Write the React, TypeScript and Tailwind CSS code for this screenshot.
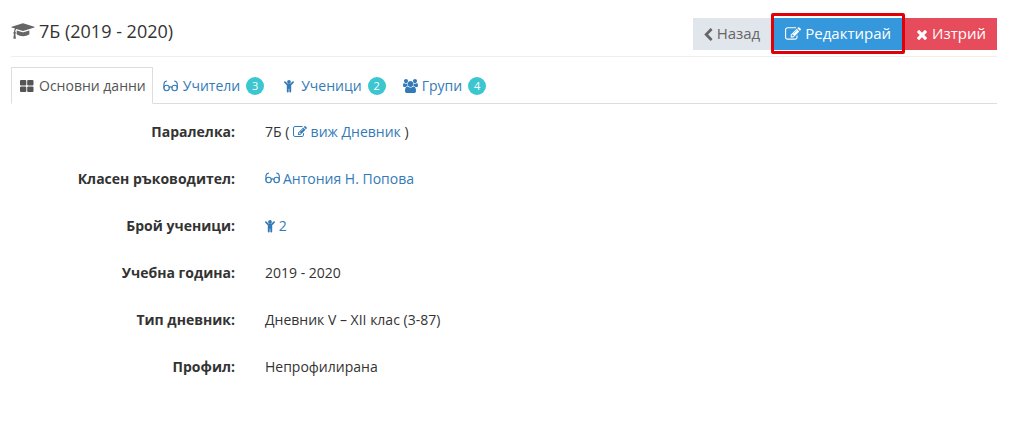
import type { ReactNode } from "react";

type IconProps = {
  className?: string;
};

type Tab = {
  label: string;
  href: string;
  icon: ReactNode;
  count?: number;
};

type Detail = {
  label: string;
  value: ReactNode;
};

const tabs: Tab[] = [
  { label: "Учители", href: "#teachers", icon: <GlassesIcon className="h-[14px] w-4" />, count: 3 },
  { label: "Ученици", href: "#students", icon: <ChildIcon className="mx-[3px] h-[14px] w-[10px]" />, count: 2 },
  { label: "Групи", href: "#groups", icon: <UsersIcon className="h-[14px] w-[15px]" />, count: 4 }
];

const details: Detail[] = [
  {
    label: "Паралелка:",
    value: (
      <>
        7Б ({" "}
        <a href="#journal" className="text-[#337ab7] hover:underline">
          <EditIcon className="inline h-[14px] w-[14px] align-[-2px]" /> виж Дневник
        </a>{" "}
        )
      </>
    )
  },
  {
    label: "Класен ръководител:",
    value: (
      <a href="#teacher" className="text-[#337ab7] hover:underline">
        <GlassesIcon className="mr-[2px] inline h-[14px] w-4 align-[-1px]" />
        Антония Н. Попова
      </a>
    )
  },
  {
    label: "Брой ученици:",
    value: (
      <a href="#students" className="text-[#337ab7] hover:underline">
        <ChildIcon className="inline h-[14px] w-[10px] align-[-2px]" /> 2
      </a>
    )
  },
  { label: "Учебна година:", value: "2019 - 2020" },
  { label: "Тип дневник:", value: "Дневник V – XII клас (3-87)" },
  { label: "Профил:", value: "Непрофилирана" }
];

export default function App() {
  return (
    <main className="bg-white pr-3 pl-[11px] font-['Open_Sans','Noto_Sans',sans-serif] text-sm text-[#333333]">
      <header className="flex h-[57px] items-start justify-between border-b border-[#eeeeee] pt-[18px]">
        <h1 className="flex h-[26px] items-center gap-1 text-lg">
          <GraduationIcon className="h-[18px] w-6 text-[#666666]" />
          7Б (2019 - 2020)
        </h1>
        <div className="flex gap-[3px] text-[15px]">
          <button
            type="button"
            className="flex h-8 items-center gap-1 bg-[#e1e5ec] px-[11px] text-[#666666]"
          >
            <ChevronIcon className="h-[13px] w-[9px]" />
            Назад
          </button>
          <button
            type="button"
            className="relative flex h-8 items-center gap-1 bg-[#3598dc] px-[11px] text-white"
          >
            <EditIcon className="h-4 w-4" />
            Редактирай
            <span className="absolute -inset-x-[3px] -top-[5px] -bottom-1 z-10 rounded-[2px] border-3 border-[#e00008]" />
          </button>
          <button type="button" className="flex h-8 items-center gap-1 bg-[#e74c5c] px-[11px] text-white">
            <TimesIcon className="h-[15px] w-3" />
            Изтрий
          </button>
        </div>
      </header>

      <nav className="mt-[10px] flex border-b border-[#dddddd]">
        <a
          href="#main"
          aria-current="page"
          className="-mb-px flex h-[37px] items-center gap-[5px] border border-[#dddddd] border-b-white bg-white pr-[6px] pl-2 text-[#555555]"
        >
          <GridIcon className="h-[14px] w-[14px]" />
          Основни данни
        </a>
        {tabs.map((tab) => (
          <a key={tab.href} href={tab.href} className="flex h-9 items-center gap-1 pt-px pr-[7px] pl-[10px] text-[#337ab7]">
            {tab.icon}
            {tab.label}
            <span className="ml-[2px] flex h-[18px] w-[18px] items-center justify-center rounded-full bg-[#3cc6d0] text-[11px] text-white">
              {tab.count}
            </span>
          </a>
        ))}
      </nav>

      <dl className="mt-[14px] grid gap-[19px] leading-7">
        {details.map((detail) => (
          <div key={detail.label} className="grid grid-cols-[224px_minmax(0,1fr)] gap-[30px]">
            <dt className="text-right font-bold">{detail.label}</dt>
            <dd>{detail.value}</dd>
          </div>
        ))}
      </dl>
    </main>
  );
}

function GraduationIcon({ className }: IconProps) {
  return (
    <svg viewBox="0 0 2304 1792" fill="currentColor" aria-hidden="true" className={className}>
      <path d="M1774 836l18 316q4 69-82 128t-235 93.5-323 34.5-323-34.5-235-93.5-82-128l18-316 574 181q22 7 48 7t48-7zm530-324q0 23-22 31l-1120 352q-4 1-10 1t-10-1l-652-206q-43 34-71 111.5t-34 178.5q63 36 63 109 0 69-58 107l58 433q2 14-8 25-9 11-24 11h-192q-15 0-24-11-10-11-8-25l58-433q-58-38-58-107 0-73 65-111 11-207 98-330l-333-104q-22-8-22-31t22-31l1120-352q4-1 10-1t10 1l1120 352q22 8 22 31z" />
    </svg>
  );
}

function ChevronIcon({ className }: IconProps) {
  return (
    <svg viewBox="410 0 1060 1664" fill="currentColor" aria-hidden="true" className={className}>
      <path d="M1427 301l-531 531 531 531q19 19 19 45t-19 45l-166 166q-19 19-45 19t-45-19l-742-742q-19-19-19-45t19-45l742-742q19-19 45-19t45 19l166 166q19 19 19 45t-19 45z" />
    </svg>
  );
}

function EditIcon({ className }: IconProps) {
  return (
    <svg viewBox="0 0 1792 1792" fill="currentColor" aria-hidden="true" className={className}>
      <path d="M888 1184l116-116-152-152-116 116v56h96v96h56zm440-720q-16-16-33 1l-350 350q-17 17-1 33t33-1l350-350q17-17 1-33zm80 594v190q0 119-84.5 203.5t-203.5 84.5h-832q-119 0-203.5-84.5t-84.5-203.5v-832q0-119 84.5-203.5t203.5-84.5h832q63 0 117 25 15 7 18 23 3 17-9 29l-49 49q-14 14-32 8-23-6-45-6h-832q-66 0-113 47t-47 113v832q0 66 47 113t113 47h832q66 0 113-47t47-113v-126q0-13 9-22l64-64q15-15 35-7t20 29zm-96-738l288 288-672 672h-288v-288zm444 132l-92 92-288-288 92-92q28-28 68-28t68 28l152 152q28 28 28 68t-28 68z" />
    </svg>
  );
}

function TimesIcon({ className }: IconProps) {
  return (
    <svg viewBox="280 0 1232 1792" fill="currentColor" aria-hidden="true" className={className}>
      <path d="M1490 1322q0 40-28 68l-136 136q-28 28-68 28t-68-28l-294-294-294 294q-28 28-68 28t-68-28l-136-136q-28-28-28-68t28-68l294-294-294-294q-28-28-28-68t28-68l136-136q28-28 68-28t68 28l294 294 294-294q28-28 68-28t68 28l136 136q28 28 28 68t-28 68l-294 294 294 294q28 28 28 68z" />
    </svg>
  );
}

function GridIcon({ className }: IconProps) {
  return (
    <svg viewBox="0 0 14 14" fill="currentColor" aria-hidden="true" className={className}>
      <rect x="0" y="1" width="6.3" height="5.5" rx="1" />
      <rect x="7.2" y="1" width="6.3" height="5.5" rx="1" />
      <rect x="0" y="7.5" width="6.3" height="5.5" rx="1" />
      <rect x="7.2" y="7.5" width="6.3" height="5.5" rx="1" />
    </svg>
  );
}

function GlassesIcon({ className }: IconProps) {
  return (
    <svg
      viewBox="0 0 16 14"
      fill="none"
      stroke="currentColor"
      strokeWidth="1.1"
      strokeLinecap="round"
      aria-hidden="true"
      className={className}
    >
      <circle cx="3.6" cy="9" r="2.7" />
      <circle cx="11.6" cy="9" r="2.7" />
      <path d="M.9 9V5.500C.9 3.600 1.600 2.400 3.600 2M14.300 9V5.500C14.300 3.600 13.600 2.400 11.600 2M6.200 8.400Q7.600 7.400 9 8.400" />
    </svg>
  );
}

function ChildIcon({ className }: IconProps) {
  return (
    <svg viewBox="0 0 10 14" fill="currentColor" aria-hidden="true" className={className}>
      <circle cx="5" cy="3" r="1.9" />
      <path d="M.3 2.500a.8.8 0 0 1 1.200 0L4 5h2l2.500-2.500a.8.8 0 0 1 1.200 1.200L7.200 6.300V12.500a.9.9 0 0 1-1.900 0V9.800H4.700V12.500a.9.9 0 0 1-1.900 0V6.300L.3 3.700a.8.8 0 0 1 0-1.200z" />
    </svg>
  );
}

function UsersIcon({ className }: IconProps) {
  return (
    <svg viewBox="0 0 1920 1792" fill="currentColor" aria-hidden="true" className={className}>
      <path d="M593 896q-162 5-265 128h-134q-82 0-138-40.5t-56-118.5q0-353 124-353 6 0 43.5 21t97.5 42.5 119 21.5q67 0 133-23-5 37-5 66 0 139 81 256zm1071 637q0 120-73 189.5t-194 69.5h-874q-121 0-194-69.5t-73-189.5q0-53 3.5-103.5t14-109 26.5-108.5 43-97.5 62-81 85.5-53.5 111.5-20q10 0 43 21.5t73 48 107 48 135 21.5 135-21.5 107-48 73-48 43-21.5q61 0 111.5 20t85.5 53.5 62 81 43 97.5 26.5 108.5 14 109 3.5 103.5zm-1024-1277q0 106-75 181t-181 75-181-75-75-181 75-181 181-75 181 75 75 181zm704 384q0 159-112.5 271.5t-271.5 112.5-271.5-112.5-112.5-271.5 112.5-271.5 271.5-112.5 271.5 112.5 112.5 271.5zm576 225q0 78-56 118.5t-138 40.5h-134q-103-123-265-128 81-117 81-256 0-29-5-66 66 23 133 23 59 0 119-21.5t97.5-42.5 43.5-21q124 0 124 353zm-128-609q0 106-75 181t-181 75-181-75-75-181 75-181 181-75 181 75 75 181z" />
    </svg>
  );
}
